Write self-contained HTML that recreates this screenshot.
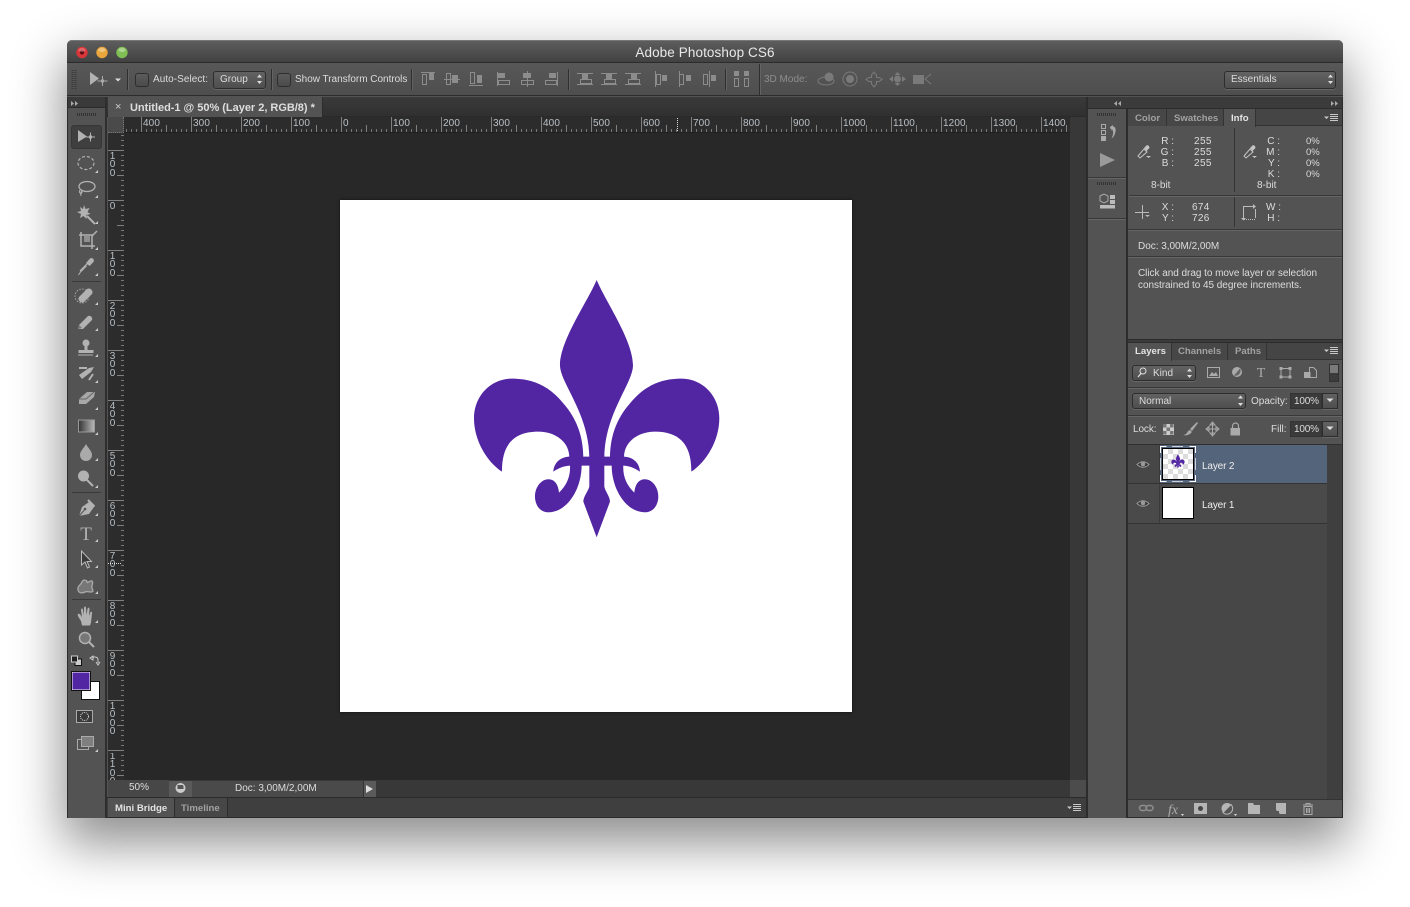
<!DOCTYPE html>
<html><head><meta charset="utf-8"><title>Adobe Photoshop CS6</title>
<style>
html,body{margin:0;padding:0;background:#fff;width:1410px;height:907px;overflow:hidden}
div{position:absolute;box-sizing:border-box}
.t{position:absolute;white-space:nowrap;font:10px/12px "Liberation Sans",sans-serif;color:#dcdcdc;letter-spacing:0;transform:translateY(1px)}
.g{color:#a2a2a2;font-weight:bold;font-size:9.6px}
.w{color:#e4e4e4;font-weight:bold;font-size:9.6px}
.r{color:#b9c0c6;letter-spacing:.1px}
.v{position:absolute;left:108px;width:9px;text-align:center;color:#b9c0c6;font:10px/8.4px "Liberation Sans",sans-serif}
.dd{background:linear-gradient(#626262,#4e4e4e);border:1px solid #2d2d2d;border-radius:3px;box-shadow:0 1px 0 #666}
.cb{background:linear-gradient(#5c5c5c,#4b4b4b);border:1px solid #2e2e2e;border-radius:3px}
.in{background:#3b3b3b;border:1px solid #333}
.sep{background:#2f2f2f;box-shadow:1px 0 0 #636363}
.hr{background:#383838;box-shadow:0 1px 0 #656565;height:1px}
</style></head><body>
<div id="win" style="left:67px;top:40px;width:1276px;height:778px;background:#535353;border-radius:5px 5px 2px 2px;box-shadow:0 22px 50px 4px rgba(0,0,0,.44)"></div>
<!-- title -->
<div style="left:67px;top:40px;width:1276px;height:23px;border-radius:5px 5px 0 0;background:linear-gradient(#5d5d5d,#424242);border-top:1px solid #777;border-bottom:1px solid #2c2c2c"></div>
<div class="t" style="left:405px;width:600px;text-align:center;top:44px;font-size:13.5px;line-height:15px;color:#e8e8e8;letter-spacing:.1px">Adobe Photoshop CS6</div>
<!-- options -->
<div style="left:67px;top:63px;width:1276px;height:33px;background:linear-gradient(#585858,#4e4e4e);border-bottom:1px solid #2c2c2c"></div>
<div class="sep" style="left:127px;top:69px;width:1px;height:21px"></div>
<div class="cb" style="left:135px;top:73px;width:14px;height:14px"></div>
<div class="t" style="left:153px;top:73px;letter-spacing:.05px">Auto-Select:</div>
<div class="dd" style="left:213px;top:71px;width:53px;height:18px"></div>
<div class="t" style="left:220px;top:73px">Group</div>
<div class="sep" style="left:271px;top:69px;width:1px;height:21px"></div>
<div class="cb" style="left:277px;top:73px;width:14px;height:14px"></div>
<div class="t" style="left:295px;top:73px;letter-spacing:-.02px">Show Transform Controls</div>
<div class="sep" style="left:411px;top:69px;width:1px;height:21px"></div>
<div class="sep" style="left:568px;top:69px;width:1px;height:21px"></div>
<div class="sep" style="left:725px;top:69px;width:1px;height:21px"></div>
<div class="sep" style="left:759px;top:64px;width:1px;height:31px"></div>
<div class="t" style="left:764px;top:73px;color:#8d8d8d">3D Mode:</div>
<div class="dd" style="left:1224px;top:71px;width:112px;height:18px"></div>
<div class="t" style="left:1231px;top:73px">Essentials</div>
<!-- tool column -->
<div style="left:67px;top:97px;width:40px;height:721px;background:#535353;border-left:1px solid #2c2c2c;border-right:2px solid #2e2e2e"></div>
<div style="left:68px;top:97px;width:37px;height:11px;background:#3a3a3a;border-bottom:1px solid #2c2c2c"></div>
<div style="left:71px;top:125px;width:31px;height:24px;background:#3f3f3f;border:1px solid #363636;border-radius:3px"></div>
<div style="left:72px;top:281px;width:29px;height:1px;background:#3a3a3a"></div>
<div style="left:72px;top:492px;width:29px;height:1px;background:#3a3a3a"></div>
<div style="left:72px;top:599px;width:29px;height:1px;background:#3a3a3a"></div>
<!-- doc tab row -->
<div style="left:107px;top:97px;width:979px;height:20px;background:linear-gradient(#3a3a3a,#303030);border-bottom:1px solid #2a2a2a"></div>
<div style="left:108px;top:97px;width:215px;height:20px;background:#535353;border-right:1px solid #2c2c2c"></div>
<div class="t" style="left:115px;top:100px;font-size:11px;color:#ccc">×</div>
<div class="t" style="left:130px;top:101px;font-size:11px;color:#dedede;font-weight:bold;letter-spacing:-.02px">Untitled-1 @ 50% (Layer 2, RGB/8) *</div>
<!-- ruler -->
<div style="left:108px;top:117px;width:962px;height:16px;background:#2c2c2c;border-bottom:1px solid #202020"></div>
<div style="left:108px;top:117px;width:16px;height:16px;background:#4a4a4a;border-right:1px dotted #777;border-bottom:1px dotted #777"></div>
<div style="left:124px;top:117px;width:946px;height:15px;background-image:linear-gradient(to right,#808080 1px,transparent 1px),linear-gradient(to right,#808080 1px,transparent 1px),linear-gradient(to right,#777 1px,transparent 1px);background-size:50px 15px,50px 7px,5px 3px;background-position:17px 0,42px 8px,2px 12px;background-repeat:repeat-x"></div>
<div class="t r" style="left:143px;top:117px">400</div><div class="t r" style="left:193px;top:117px">300</div><div class="t r" style="left:243px;top:117px">200</div><div class="t r" style="left:293px;top:117px">100</div><div class="t r" style="left:343px;top:117px">0</div><div class="t r" style="left:393px;top:117px">100</div><div class="t r" style="left:443px;top:117px">200</div><div class="t r" style="left:493px;top:117px">300</div><div class="t r" style="left:543px;top:117px">400</div><div class="t r" style="left:593px;top:117px">500</div><div class="t r" style="left:643px;top:117px">600</div><div class="t r" style="left:693px;top:117px">700</div><div class="t r" style="left:743px;top:117px">800</div><div class="t r" style="left:793px;top:117px">900</div><div class="t r" style="left:843px;top:117px">1000</div><div class="t r" style="left:893px;top:117px">1100</div><div class="t r" style="left:943px;top:117px">1200</div><div class="t r" style="left:993px;top:117px">1300</div><div class="t r" style="left:1043px;top:117px">1400</div>
<!-- v ruler -->
<div style="left:108px;top:133px;width:16px;height:647px;background:#2c2c2c"></div>
<div style="left:108px;top:133px;width:16px;height:647px;background-image:linear-gradient(#808080 1px,transparent 1px),linear-gradient(#808080 1px,transparent 1px),linear-gradient(#777 1px,transparent 1px);background-size:16px 50px,7px 50px,3px 5px;background-position:0 17px,9px 42px,13px 2px;background-repeat:repeat-y"></div>
<div class="v" style="top:153px">1<br>0<br>0</div><div class="v" style="top:203px">0</div><div class="v" style="top:253px">1<br>0<br>0</div><div class="v" style="top:303px">2<br>0<br>0</div><div class="v" style="top:353px">3<br>0<br>0</div><div class="v" style="top:403px">4<br>0<br>0</div><div class="v" style="top:453px">5<br>0<br>0</div><div class="v" style="top:503px">6<br>0<br>0</div><div class="v" style="top:553px">7<br>0<br>0</div><div class="v" style="top:603px">8<br>0<br>0</div><div class="v" style="top:653px">9<br>0<br>0</div><div class="v" style="top:703px">1<br>0<br>0<br>0</div><div class="v" style="top:753px;height:27px;overflow:hidden">1<br>1<br>0<br>0</div>
<!-- canvas -->
<div style="left:124px;top:133px;width:946px;height:647px;background:#282828"></div>
<div style="left:340px;top:200px;width:512px;height:512px;background:#fff;box-shadow:0 0 3px rgba(0,0,0,.6)"></div>
<!-- scrollbars -->
<div style="left:1070px;top:117px;width:16px;height:663px;background:#383838"></div>
<div style="left:1070px;top:780px;width:16px;height:18px;background:#4c4c4c"></div>
<div style="left:108px;top:780px;width:962px;height:18px;background:#383838"></div>
<div style="left:108px;top:780px;width:61px;height:18px;background:#474747"></div>
<div class="t" style="left:129px;top:781px">50%</div>
<div style="left:169px;top:781px;width:23px;height:16px;background:#5a5a5a"></div>
<div style="left:192px;top:781px;width:171px;height:16px;background:#4a4a4a"></div>
<div class="t" style="left:235px;top:782px">Doc: 3,00M/2,00M</div>
<div style="left:363px;top:781px;width:13px;height:16px;background:#5a5a5a;border-left:1px solid #333"></div>
<!-- mini bridge -->
<div style="left:107px;top:797px;width:979px;height:21px;background:#3f3f3f;border-top:1px solid #2b2b2b;border-bottom:1px solid #2b2b2b"></div>
<div style="left:108px;top:798px;width:67px;height:19px;background:#535353;border-right:1px solid #2c2c2c"></div>
<div style="left:175px;top:798px;width:53px;height:19px;background:#474747;border-right:1px solid #2c2c2c"></div>
<div class="t w" style="left:115px;top:802px">Mini Bridge</div>
<div class="t g" style="left:181px;top:802px">Timeline</div>
<!-- dock -->
<div style="left:1086px;top:97px;width:42px;height:721px;background:#535353;border-left:2px solid #2c2c2c;border-right:2px solid #2c2c2c"></div>
<div style="left:1088px;top:97px;width:255px;height:12px;background:#3b3b3b;border-bottom:1px solid #2c2c2c"></div>
<div class="hr" style="left:1088px;top:177px;width:38px"></div>
<div class="hr" style="left:1088px;top:218px;width:38px"></div>
<!-- info panel -->
<div style="left:1128px;top:109px;width:215px;height:17px;background:#454545;border-bottom:1px solid #333"></div>
<div style="left:1128px;top:109px;width:39px;height:17px;background:#474747;border-right:1px solid #333"></div>
<div style="left:1167px;top:109px;width:57px;height:17px;background:#474747;border-right:1px solid #333"></div>
<div style="left:1224px;top:109px;width:32px;height:18px;background:#535353;border-right:1px solid #333"></div>
<div class="t g" style="left:1135px;top:112px">Color</div>
<div class="t g" style="left:1174px;top:112px">Swatches</div>
<div class="t w" style="left:1231px;top:112px">Info</div>
<div class="t" style="left:1160px;width:14px;text-align:right;top:135px;line-height:11px">R :<br>G :<br>B :</div>
<div class="t" style="left:1194px;top:135px;line-height:11px;letter-spacing:.4px">255<br>255<br>255</div>
<div class="t" style="left:1151px;top:179px">8-bit</div>
<div class="t" style="left:1266px;width:14px;text-align:right;top:135px;line-height:11px">C :<br>M :<br>Y :<br>K :</div>
<div class="t" style="left:1306px;top:135px;line-height:11px;font-size:9.5px">0%<br>0%<br>0%<br>0%</div>
<div class="t" style="left:1257px;top:179px">8-bit</div>
<div style="left:1234px;top:128px;width:1px;height:64px;background:#333"></div>
<div class="hr" style="left:1129px;top:195px;width:214px"></div>
<div class="t" style="left:1160px;width:14px;text-align:right;top:201px;line-height:11px">X :<br>Y :</div>
<div class="t" style="left:1192px;top:201px;line-height:11px;letter-spacing:.3px">674<br>726</div>
<div class="t" style="left:1266px;width:14px;text-align:right;top:201px;line-height:11px">W :<br>H :</div>
<div style="left:1234px;top:197px;width:1px;height:30px;background:#333"></div>
<div class="hr" style="left:1128px;top:229px;width:215px"></div>
<div class="t" style="left:1138px;top:240px;letter-spacing:-.03px">Doc: 3,00M/2,00M</div>
<div class="hr" style="left:1128px;top:256px;width:215px"></div>
<div class="t" style="left:1138px;top:267px;line-height:12px;letter-spacing:-.04px">Click and drag to move layer or selection<br>constrained to 45 degree increments.</div>
<!-- layers panel -->
<div style="left:1128px;top:339px;width:215px;height:4px;background:#3b3b3b;border-top:1px solid #2c2c2c;border-bottom:1px solid #2c2c2c"></div>
<div style="left:1128px;top:343px;width:215px;height:17px;background:#454545;border-bottom:1px solid #333"></div>
<div style="left:1128px;top:343px;width:44px;height:18px;background:#535353;border-right:1px solid #333"></div>
<div style="left:1172px;top:343px;width:56px;height:17px;background:#474747;border-right:1px solid #333"></div>
<div style="left:1228px;top:343px;width:39px;height:17px;background:#474747;border-right:1px solid #333"></div>
<div class="t w" style="left:1135px;top:345px">Layers</div>
<div class="t g" style="left:1178px;top:345px">Channels</div>
<div class="t g" style="left:1235px;top:345px">Paths</div>
<div class="dd" style="left:1132px;top:365px;width:64px;height:16px"></div>
<div class="t" style="left:1153px;top:367px">Kind</div>
<div style="left:1329px;top:364px;width:10px;height:18px;background:linear-gradient(#7a7a7a 50%,#3c3c3c 50%);border:1px solid #333"></div>
<div class="hr" style="left:1128px;top:387px;width:215px"></div>
<div class="dd" style="left:1132px;top:393px;width:114px;height:16px"></div>
<div class="t" style="left:1139px;top:395px">Normal</div>
<div class="t" style="left:1251px;top:395px">Opacity:</div>
<div class="in" style="left:1290px;top:393px;width:32px;height:16px"></div>
<div class="dd" style="left:1322px;top:393px;width:16px;height:16px;border-radius:0"></div>
<div class="t" style="left:1294px;top:395px;letter-spacing:-.2px">100%</div>
<div class="hr" style="left:1128px;top:415px;width:215px"></div>
<div class="t" style="left:1133px;top:423px;letter-spacing:-.1px">Lock:</div>
<div class="t" style="left:1271px;top:423px">Fill:</div>
<div class="in" style="left:1290px;top:421px;width:32px;height:16px"></div>
<div class="dd" style="left:1322px;top:421px;width:16px;height:16px;border-radius:0"></div>
<div class="t" style="left:1294px;top:423px;letter-spacing:-.2px">100%</div>
<div style="left:1128px;top:444px;width:215px;height:355px;background:#474747;border-top:1px solid #2f2f2f"></div>
<div style="left:1327px;top:445px;width:16px;height:354px;background:#3f3f3f"></div>
<div style="left:1128px;top:445px;width:199px;height:39px;background:#474747;border-bottom:1px solid #333"></div>
<div style="left:1159px;top:445px;width:168px;height:39px;background:#54647a;border-bottom:1px solid #333;border-left:1px solid #3a3a3a"></div>
<div style="left:1128px;top:484px;width:199px;height:40px;background:#4a4a4a;border-bottom:1px solid #333"></div>
<div style="left:1159px;top:484px;width:1px;height:39px;background:#3a3a3a"></div>
<div style="left:1162px;top:448px;width:32px;height:32px;border:1px solid #000;background-color:#fff;background-image:linear-gradient(45deg,#dcdcdc 25%,transparent 25%,transparent 75%,#dcdcdc 75%),linear-gradient(45deg,#dcdcdc 25%,transparent 25%,transparent 75%,#dcdcdc 75%);background-size:10px 10px;background-position:0 0,5px 5px"></div>
<div style="left:1162px;top:487px;width:32px;height:32px;border:1px solid #000;background:#fff"></div>
<div class="t" style="left:1202px;top:460px;color:#eee;letter-spacing:-.15px">Layer 2</div>
<div class="t" style="left:1202px;top:499px;color:#eee;letter-spacing:-.15px">Layer 1</div>
<div style="left:1128px;top:799px;width:215px;height:19px;background:#565656;border-top:1px solid #333;border-bottom:1px solid #2c2c2c"></div>
<div style="left:1342px;top:97px;width:1px;height:721px;background:#2c2c2c"></div>

<svg width="1410" height="907" viewBox="0 0 1410 907" style="position:absolute;left:0;top:0">
<defs>
<linearGradient id="gr"><stop offset="0" stop-color="#333"/><stop offset="1" stop-color="#bbb"/></linearGradient>
<g id="fleur">
<path d="M410 30C440 100 518 210 519 285C520 340 433 430 433 565L433 650C436 665 450 680 450 695L410 802L370 695C370 680 384 665 388 650L388 565C388 430 300 340 300 285C301 210 380 100 410 30Z"/>
<path d="M280 605C282 575 305 560 330 560L490 560C515 560 538 575 540 605C525 595 510 588 490 587L330 587C310 588 295 595 280 605Z"/>
<path d="M126 605C80 575 42 510 42 445C42 375 95 326 155 326C215 326 265 345 310 400C350 445 370 500 370 562L328 562C328 515 285 485 235 485C165 485 125 520 126 605Z"/>
<path d="M365 585C365 660 320 727 265 727C240 727 225 705 225 680C225 650 245 628 265 628C285 628 295 645 297 668C320 645 332 620 330 585Z"/>
<g transform="translate(820,0) scale(-1,1)"><path d="M126 605C80 575 42 510 42 445C42 375 95 326 155 326C215 326 265 345 310 400C350 445 370 500 370 562L328 562C328 515 285 485 235 485C165 485 125 520 126 605Z"/>
<path d="M365 585C365 660 320 727 265 727C240 727 225 705 225 680C225 650 245 628 265 628C285 628 295 645 297 668C320 645 332 620 330 585Z"/></g>
</g>
</defs>
<!-- traffic lights -->
<circle cx="82" cy="52.500" r="5.700" fill="#d9363a"/><circle cx="82" cy="52.500" r="2" fill="#5c0b10"/>
<circle cx="102" cy="52.500" r="5.700" fill="#e8a63d"/><circle cx="122" cy="52.500" r="5.700" fill="#80bf55"/>
<ellipse cx="82" cy="50" rx="3.500" ry="2" fill="#fff" opacity=".25"/><ellipse cx="102" cy="50" rx="3.500" ry="2" fill="#fff" opacity=".35"/><ellipse cx="122" cy="50" rx="3.500" ry="2" fill="#fff" opacity=".35"/>
<!-- fleur -->
<g transform="translate(460,270) scale(.3333)" fill="#5225a3"><use href="#fleur"/></g>
<!-- options icons -->
<path d="M72.500 70V90M75.500 70V90" stroke="#3a3a3a" stroke-width="2" stroke-dasharray="1 1"/>
<path d="M90 72L99 78.500L90 85Z" fill="#b2b2b2"/>
<path d="M102.500 76V86M97.500 81H107.500" stroke="#aaa"/><rect x="101" y="79.500" width="3" height="3" fill="#aaa"/>
<path d="M115 78.500h6l-3 3z" fill="#ddd"/>
<path d="M257 77.500l2.500-3 2.500 3zM257 81l2.500 3 2.500-3z" fill="#ddd"/>
<path d="M1328 77.500l2.500-3 2.500 3zM1328 81l2.500 3 2.500-3z" fill="#ddd"/>
<g fill="none" stroke="#8c8c8c">
<path d="M421 72.500H435M422.500 74.500h4v10h-4zM444 79.500H460M446.500 73.500h4v11h-4zM469 85.500H483M470.500 72.500h4v11h-4z"/>
<path d="M497.500 72V86M498.500 80.500h11v4h-11zM527.500 71V87M521.500 80.500h12v4h-12zM557.500 72V86M545.500 80.500h11v4h-11z"/>
<path d="M577 73.500H593M580.500 79.500h11v4h-11zM577 84.500H593M601 73.500H617M601 84.500H617M604.500 79.500h11v4h-11zM625 84.500H641M628.500 79.500h11v4h-11zM625 73.500H641"/>
<path d="M655.500 71V87M656.500 74.500h4v10h-4zM679.500 71V87M679.500 74.500h4v10h-4zM709.500 71V87M703.500 74.500h4v10h-4zM734.500 78.500h4v8h-4zM744.500 78.500h4v8h-4z"/>
</g>
<g fill="#8c8c8c">
<rect x="429" y="73" width="5" height="7"/><rect x="452" y="75" width="6" height="8"/><rect x="477" y="75" width="5" height="8"/>
<rect x="498" y="73" width="7" height="5"/><rect x="523" y="73" width="8" height="5"/><rect x="549" y="73" width="7" height="5"/>
<rect x="582" y="74" width="6" height="5"/><rect x="606" y="74" width="6" height="5"/><rect x="631" y="74" width="6" height="5"/>
<rect x="662" y="75" width="5" height="6"/><rect x="686" y="75" width="5" height="6"/><rect x="711" y="75" width="5" height="6"/>
<rect x="734" y="71" width="5" height="5"/><rect x="744" y="71" width="5" height="5"/>
</g>
<!-- 3D icons -->
<g stroke="#7a7a7a" fill="none">
<ellipse cx="826" cy="81" rx="8" ry="4"/><circle cx="829" cy="77" r="4" fill="#7a7a7a"/>
<circle cx="850" cy="79" r="7"/><circle cx="850" cy="79" r="3.500" fill="#7a7a7a"/>
<path d="M874 72l2.500 3v2.500h2.500l3 2-3 2h-2.500V84l-2.500 3-2.500-3v-2.500h-2.500l-3-2 3-2h2.500V75z"/>
</g>
<g fill="#7a7a7a"><circle cx="897.500" cy="79" r="3.500"/><path d="M889 79l4-3v6zM906 79l-4-3v6zM897.500 72l3 3h-6zM897.500 86l3-3h-6z"/><rect x="913" y="75" width="11" height="9"/></g>
<path d="M931 74l-6 5 6 5" fill="none" stroke="#7a7a7a"/>
<!-- collapse arrows -->
<g fill="#aaa"><path d="M71 101l3 2.500-3 2.500zM75 101l3 2.500-3 2.500zM1121 101l-3 2.500 3 2.500zM1117 101l-3 2.500 3 2.500zM1331 101l3 2.500-3 2.500zM1335 101l3 2.500-3 2.500z"/></g>
<!-- grips -->
<g stroke="#333" stroke-width="3" stroke-dasharray="1 1"><path d="M77 114.500H96M1097 114.500H1116M1097 183.500H1116"/></g>
<!-- tools -->
<g fill="#b2b2b2" stroke="none">
<path d="M78 130L87 136.500L78 142Z"/><rect x="89" y="135.500" width="3" height="3"/>
<path d="M84 205l1.500 4 4-1-2 4 3 2-4 1 0 4-3-3-3.500 2 1-4-4-2 4-1-1-4 3 2z"/>
</g>
<path fill="#ccc" d="M98 170v3h-3zM98 195v3h-3zM98 221v3h-3zM98 247v3h-3zM98 273v3h-3zM98 302v3h-3zM98 328v3h-3zM98 354v3h-3zM98 380v3h-3zM98 407v3h-3zM98 432v3h-3zM98 458v3h-3zM98 485v3h-3zM98 513v3h-3zM98 539v3h-3zM98 565v3h-3zM98 591v3h-3zM98 620v3h-3zM98 749v3h-3z"/>
<g fill="none" stroke="#b2b2b2">
<path d="M90.500 132.500v9M86 137h9" stroke-width="1"/>
<ellipse cx="86" cy="163" rx="8" ry="6.500" stroke-dasharray="3 2" stroke-width="1.200"/>
<ellipse cx="87" cy="186.500" rx="8" ry="5" stroke-width="1.300"/><path d="M80 190c-2 3 2 5 2 2s-2 1-1 4" stroke-width="1"/>
<path d="M87 216L95 224" stroke-width="2"/>
<path d="M81 232V246H95M79 235H92V249M92 236l5-5" stroke-width="1.500"/>
<path d="M80 271l8-8" stroke-width="1.300"/><path d="M78.500 275l2-3 6-6" stroke-width="1"/>
</g>
<rect x="84" y="236" width="6" height="6" fill="#8f8f8f"/>
<path d="M86 263l4-4.500c2-1.500 5 1 3.500 3.500l-4 4z" fill="#b2b2b2"/>
<!-- heal -->
<circle cx="82" cy="296" r="7" fill="none" stroke="#aaa" stroke-dasharray="1.500 1.500"/>
<path d="M80 299l8-8c3-2 7 2 5 5l-8 8c-3 2-7-2-5-5z" fill="#b2b2b2" transform="translate(-1,-2)"/>
<!-- brush -->
<path d="M78 329l1-4 9-9c2-1 5 1 4 4l-9 9z" fill="#b2b2b2"/><path d="M78 329l1-4 3 3z" fill="#777"/>
<!-- stamp -->
<circle cx="86" cy="343" r="3.500" fill="#b2b2b2"/><path d="M84.500 345h3v5h6v3h-15v-3h6z" fill="#b2b2b2"/><path d="M78 355h15" stroke="#b2b2b2"/>
<!-- history -->
<path d="M79 375l10-7 5-1-3 5-9 7z" fill="#b2b2b2"/><path d="M79 368h8M93 374l-4 6" stroke="#b2b2b2" stroke-width="2" fill="none"/>
<!-- eraser -->
<path d="M79 399l8-7h8l-1 5-8 7h-7z" fill="#a8a8a8"/><path d="M79 399h7l8-7" stroke="#666" fill="none"/>
<!-- gradient -->
<rect x="78.500" y="420" width="16" height="12" fill="url(#gr)" stroke="#999"/>
<!-- blur -->
<path d="M86 444c2 4 6 7 6 11a6 6 0 0 1-12 0c0-4 4-7 6-11z" fill="#aaa"/>
<!-- dodge -->
<circle cx="83.500" cy="476" r="5.500" fill="#b2b2b2"/><path d="M87 480l6 6" stroke="#b2b2b2" stroke-width="2"/>
<!-- pen -->
<path d="M79 516l3-9 7-5 5 5-5 7z" fill="#b2b2b2"/><path d="M79 516l5.500-6" stroke="#535353"/><circle cx="85" cy="509" r="1.300" fill="#535353"/><path d="M88 500l6.500 6.500" stroke="#b2b2b2" stroke-width="2"/>
<!-- type -->
<text x="86" y="540" text-anchor="middle" font-family="Liberation Serif,serif" font-size="19" fill="#b2b2b2">T</text>
<!-- shape -->
<path d="M78 590c-1-4 3-5 4-8 1-3 5-2 5 0s3-2 5-1c2 2-1 5 0 7s2 4-1 4-4-1-6 0-6 2-7-2z" fill="#777" stroke="#aaa" stroke-width="1.300"/>
<!-- path select -->
<path d="M81.500 551v14l3.500-3 2.500 6 2-1-2.500-5.500h4.500z" fill="#3a3a3a" stroke="#bbb"/>
<!-- hand -->
<path d="M81 621c-2-3-4-6-3-7 2-1 3 2 4 3l-1-7c0-2 2-2 2 0l1 5 0-7c0-2 2-2 2 0l.5 7 1-6c.5-2 2-1.500 2 0l-.5 7 1.500-4c1-1 2 0 1.500 1.500l-1 9-1 3h-8z" fill="#b2b2b2"/>
<!-- zoom -->
<circle cx="85" cy="638" r="5.500" fill="#777" stroke="#b2b2b2" stroke-width="1.500"/><path d="M89 642l5 5" stroke="#b2b2b2" stroke-width="2"/>
<!-- mini swatches -->
<rect x="75" y="659" width="6.500" height="6.500" fill="#ccc" stroke="#111"/><rect x="71.500" y="656" width="6" height="6" fill="#222" stroke="#ccc"/>
<path d="M91 657h4q3 0 3 3v3M90 658l3-2v4zM96 662l2 3 2-3" fill="none" stroke="#ccc"/>
<!-- fg bg -->
<rect x="81.500" y="681.500" width="18" height="18" fill="#fff" stroke="#111"/>
<rect x="72" y="672" width="18" height="18" fill="#5225a3" stroke="#fff"/><rect x="71.500" y="671.500" width="19" height="19" fill="none" stroke="#111"/>
<!-- quick mask -->
<rect x="76.500" y="710.500" width="16" height="12" fill="#3a3a3a" stroke="#aaa"/><circle cx="84.500" cy="716.500" r="4" fill="none" stroke="#ddd" stroke-dasharray="1 1"/>
<!-- screen mode -->
<rect x="77.500" y="739.500" width="11" height="10" fill="none" stroke="#aaa"/><rect x="81.500" y="736.500" width="12" height="10" fill="#7f7f7f" stroke="#aaa"/>
<!-- status -->
<circle cx="180.500" cy="788" r="5" fill="#ccc"/><path d="M177.500 785h5l1 1v3h-6z" fill="#555"/>
<path d="M366 785l7 4-7 4z" fill="#ddd"/>
<!-- panel menus -->
<g fill="#c8c8c8"><path d="M1067 806.500h5l-2.500 2.500zM1073 804h8v1h-8zM1073 806h8v1h-8zM1073 808h8v1h-8zM1073 810h8v1h-8z"/>
<path d="M1324 116.500h5l-2.500 2.500zM1330 114h8v1h-8zM1330 116h8v1h-8zM1330 118h8v1h-8zM1330 120h8v1h-8z"/>
<path d="M1324 349.500h5l-2.500 2.500zM1330 347h8v1h-8zM1330 349h8v1h-8zM1330 351h8v1h-8zM1330 353h8v1h-8z"/></g>
<!-- dock icons -->
<g fill="none" stroke="#aaa"><rect x="1101.500" y="124.500" width="4" height="4"/><rect x="1101.500" y="130.500" width="4" height="4"/></g>
<rect x="1101" y="136" width="5" height="5" fill="#aaa"/>
<path d="M1110 127l3-2v1.500c2 0 3 2 2.500 5s-2 6-4 7c1-2 2-5 1.500-7s-1-2.500-1.500-2.500V131z" fill="#aaa"/>
<path d="M1100 153l15 7-15 7z" fill="#9a9a9a"/>
<path d="M1100 196l4-2 4 2v5l-4 2-4-2z" fill="none" stroke="#aaa"/><rect x="1110" y="195" width="5" height="4" fill="#bbb"/><rect x="1110" y="200" width="5" height="4" fill="#bbb"/><rect x="1100" y="205" width="15" height="3.500" fill="#bbb"/>
<!-- info icons -->
<g fill="#c4c4c4"><path d="M1138 156l6-7 3 3-7 6z" fill="none" stroke="#c4c4c4"/><path d="M1144 148l3-3 2 1 .5 2-3 3z"/><path d="M1146 156h5l-2.500 2z"/></g>
<g fill="#c4c4c4"><path d="M1244 156l6-7 3 3-7 6z" fill="none" stroke="#c4c4c4"/><path d="M1250 148l3-3 2 1 .5 2-3 3z"/><path d="M1252 156h5l-2.500 2z"/></g>
<path d="M1142.500 205V219M1135 212.500H1149" stroke="#bbb" fill="none"/><path d="M1145 215h5l-2.500 2z" fill="#bbb"/>
<path d="M1243.500 219V206.500H1254M1255.500 209V218" fill="none" stroke="#bbb"/><path d="M1244 219.500H1255" stroke="#bbb" stroke-dasharray="1 1"/><path d="M1253 204l3 2.500-3 2.500zM1241 218h5l-2.500 2.500z" fill="#bbb"/>
<!-- layers filter icons -->
<circle cx="1143" cy="371" r="3" fill="none" stroke="#ddd"/><path d="M1141 373.500l-3 3.500" stroke="#ddd" stroke-width="1.300"/>
<path d="M1187 371.500l2.500-3 2.500 3zM1187 375l2.500 3 2.500-3z" fill="#ddd"/>
<path d="M1238 398.500l2.500-3 2.500 3zM1238 403l2.500 3 2.500-3z" fill="#ddd"/>
<rect x="1207.500" y="367.500" width="12" height="10" fill="none" stroke="#aaa"/><path d="M1209 376l3-4 2 2 2-2 2 4z" fill="#aaa"/>
<circle cx="1237" cy="372" r="5" fill="#aaa"/><path d="M1240 368.500a5 5 0 0 1-6 7z" fill="#666"/>
<text x="1261" y="377" text-anchor="middle" font-family="Liberation Serif,serif" font-size="14" fill="#aaa">T</text>
<rect x="1281" y="368.500" width="9" height="8.500" fill="none" stroke="#aaa"/><path d="M1279.500 367h3v3h-3zM1288.500 367h3v3h-3zM1279.500 375.500h3v3h-3zM1288.500 375.500h3v3h-3z" fill="#aaa"/>
<path d="M1309.500 367.500h4l3 3v7h-7z" fill="none" stroke="#aaa"/><rect x="1304" y="372" width="6.500" height="6" fill="#aaa"/>
<path d="M1326.500 398.500h7l-3.500 3.500zM1326.500 426.500h7l-3.500 3.500z" fill="#ddd"/>
<!-- lock icons -->
<rect x="1163" y="424" width="11" height="11" fill="#ccc"/><path d="M1163 424h3.500v3.500H1163zM1170 424h3.500v3.500H1170zM1166.500 427.500h3.500v3.500h-3.500zM1163 431h3.500v3.500H1163zM1170 431h3.500v3.500H1170z" fill="#777"/>
<path d="M1183 435c3 0 4-2 5-4l2-1 2 2-1 1c-2 2-5 3-8 2zM1190 429l7-7 1 1-6 8z" fill="#aaa"/>
<path d="M1212.500 423v12M1207 429h12" stroke="#aaa"/><path d="M1212.500 422l2.500 3h-5zM1212.500 436l2.500-3h-5zM1206 429l3-2.500v5zM1219 429l-3-2.500v5z" fill="none" stroke="#aaa"/>
<rect x="1230.500" y="428" width="9.500" height="7.500" fill="#aaa"/><path d="M1232.500 428v-2a3 3 0 0 1 6 0v2" fill="none" stroke="#aaa" stroke-width="1.200"/>
<!-- eyes -->
<path d="M1137 464.500q6-5.500 12 0q-6 5.500-12 0z" fill="#333" stroke="#999"/><circle cx="1143" cy="464" r="2.300" fill="#999"/>
<path d="M1137 503.500q6-5.500 12 0q-6 5.500-12 0z" fill="#333" stroke="#999"/><circle cx="1143" cy="503" r="2.300" fill="#999"/>
<!-- thumb -->
<g transform="translate(1170.800,454) scale(.0175)" fill="#5225a3" stroke="#5225a3" stroke-width="25"><use href="#fleur"/></g>
<path d="M1160.500 453v-6.500h6M1189.500 446.500h6v6.500M1160.500 475v6.500h6M1189.500 481.500h6V475" fill="none" stroke="#fff"/>
<path d="M1172 446.500h11M1172 481.500h11M1160.500 458v12M1195.500 458v12" stroke="#fff" fill="none" opacity=".7"/>
<!-- layer bottom -->
<g fill="none" stroke="#8f8f8f" stroke-width="1.500"><rect x="1139.500" y="805.500" width="7" height="5" rx="2.500"/><rect x="1146" y="805.500" width="7" height="5" rx="2.500"/></g>
<text x="1168" y="814" font-family="Liberation Serif,serif" font-style="italic" font-size="14" fill="#aaa">fx</text>
<path d="M1181 814h3l-1.500 2zM1234 814h3l-1.500 2z" fill="#ddd"/>
<rect x="1194" y="803" width="13" height="11" fill="#b5b5b5"/><circle cx="1200.500" cy="808.500" r="2.500" fill="#444"/>
<circle cx="1227" cy="808.500" r="5.500" fill="#b5b5b5"/><path d="M1223 812.500l8-8a5.500 5.500 0 0 1-8 8z" fill="#555" stroke="#b5b5b5"/>
<path d="M1248 803h5l1 2h6v9h-12z" fill="#b5b5b5"/>
<path d="M1276 803h10v11h-6l-4-4z" fill="#b5b5b5"/><path d="M1276 811l3 3v-3z" fill="#555"/>
<path d="M1303 805h10M1306 805v-1.500h4V805M1304 806.500h8v8h-8zM1306.500 808v5M1308 808v5M1309.500 808v5" fill="none" stroke="#aaa"/>
<path d="M677.500 118v14" stroke="#ddd" stroke-dasharray="1 1"/>
<path d="M108 563.500h14" stroke="#ddd" stroke-dasharray="1 1"/>
</svg>
</body></html>
